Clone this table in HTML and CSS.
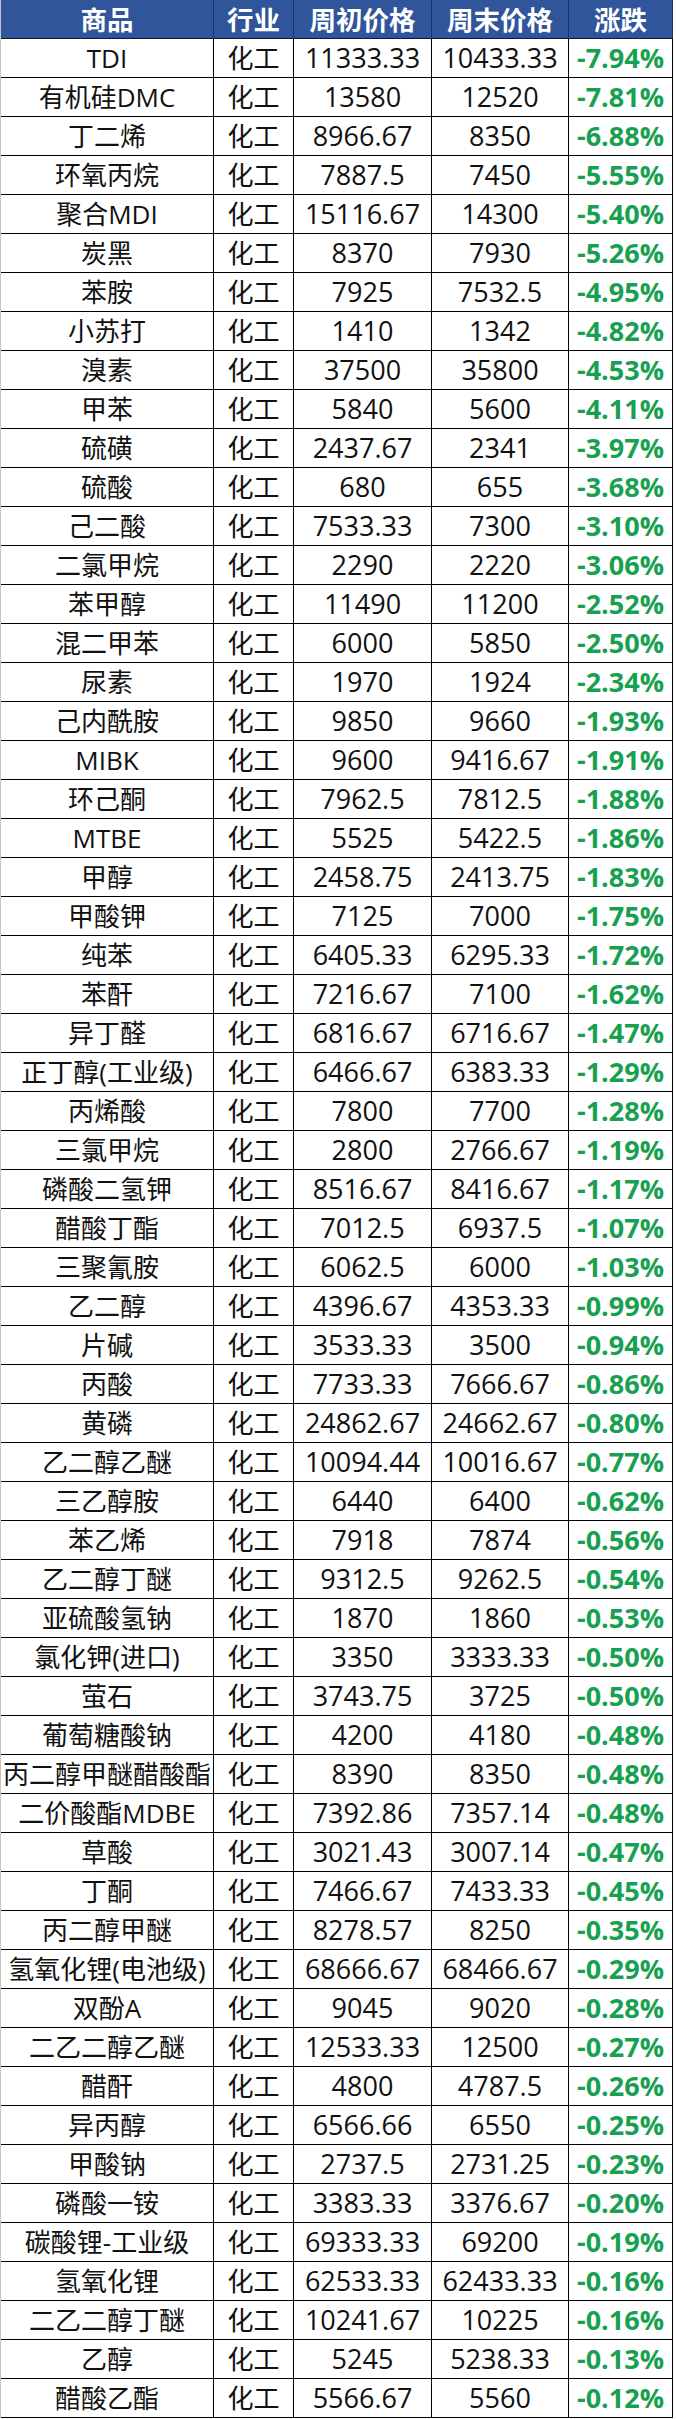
FILE: index.html
```html
<!DOCTYPE html>
<html lang="zh-CN">
<head>
<meta charset="utf-8">
<title>化工品价格周涨跌</title>
<link rel="stylesheet" href="styles.css">
</head>
<body>
<table class="price-table">
<colgroup>
<col class="c-name"><col class="c-ind"><col class="c-start"><col class="c-end"><col class="c-chg">
</colgroup>
<thead>
<tr><th>商品</th><th>行业</th><th>周初价格</th><th>周末价格</th><th>涨跌</th></tr>
</thead>
<tbody>
<tr><td>TDI</td><td>化工</td><td class="num">11333.33</td><td class="num">10433.33</td><td class="chg">-7.94%</td></tr>
<tr><td>有机硅DMC</td><td>化工</td><td class="num">13580</td><td class="num">12520</td><td class="chg">-7.81%</td></tr>
<tr><td>丁二烯</td><td>化工</td><td class="num">8966.67</td><td class="num">8350</td><td class="chg">-6.88%</td></tr>
<tr><td>环氧丙烷</td><td>化工</td><td class="num">7887.5</td><td class="num">7450</td><td class="chg">-5.55%</td></tr>
<tr><td>聚合MDI</td><td>化工</td><td class="num">15116.67</td><td class="num">14300</td><td class="chg">-5.40%</td></tr>
<tr><td>炭黑</td><td>化工</td><td class="num">8370</td><td class="num">7930</td><td class="chg">-5.26%</td></tr>
<tr><td>苯胺</td><td>化工</td><td class="num">7925</td><td class="num">7532.5</td><td class="chg">-4.95%</td></tr>
<tr><td>小苏打</td><td>化工</td><td class="num">1410</td><td class="num">1342</td><td class="chg">-4.82%</td></tr>
<tr><td>溴素</td><td>化工</td><td class="num">37500</td><td class="num">35800</td><td class="chg">-4.53%</td></tr>
<tr><td>甲苯</td><td>化工</td><td class="num">5840</td><td class="num">5600</td><td class="chg">-4.11%</td></tr>
<tr><td>硫磺</td><td>化工</td><td class="num">2437.67</td><td class="num">2341</td><td class="chg">-3.97%</td></tr>
<tr><td>硫酸</td><td>化工</td><td class="num">680</td><td class="num">655</td><td class="chg">-3.68%</td></tr>
<tr><td>己二酸</td><td>化工</td><td class="num">7533.33</td><td class="num">7300</td><td class="chg">-3.10%</td></tr>
<tr><td>二氯甲烷</td><td>化工</td><td class="num">2290</td><td class="num">2220</td><td class="chg">-3.06%</td></tr>
<tr><td>苯甲醇</td><td>化工</td><td class="num">11490</td><td class="num">11200</td><td class="chg">-2.52%</td></tr>
<tr><td>混二甲苯</td><td>化工</td><td class="num">6000</td><td class="num">5850</td><td class="chg">-2.50%</td></tr>
<tr><td>尿素</td><td>化工</td><td class="num">1970</td><td class="num">1924</td><td class="chg">-2.34%</td></tr>
<tr><td>己内酰胺</td><td>化工</td><td class="num">9850</td><td class="num">9660</td><td class="chg">-1.93%</td></tr>
<tr><td>MIBK</td><td>化工</td><td class="num">9600</td><td class="num">9416.67</td><td class="chg">-1.91%</td></tr>
<tr><td>环己酮</td><td>化工</td><td class="num">7962.5</td><td class="num">7812.5</td><td class="chg">-1.88%</td></tr>
<tr><td>MTBE</td><td>化工</td><td class="num">5525</td><td class="num">5422.5</td><td class="chg">-1.86%</td></tr>
<tr><td>甲醇</td><td>化工</td><td class="num">2458.75</td><td class="num">2413.75</td><td class="chg">-1.83%</td></tr>
<tr><td>甲酸钾</td><td>化工</td><td class="num">7125</td><td class="num">7000</td><td class="chg">-1.75%</td></tr>
<tr><td>纯苯</td><td>化工</td><td class="num">6405.33</td><td class="num">6295.33</td><td class="chg">-1.72%</td></tr>
<tr><td>苯酐</td><td>化工</td><td class="num">7216.67</td><td class="num">7100</td><td class="chg">-1.62%</td></tr>
<tr><td>异丁醛</td><td>化工</td><td class="num">6816.67</td><td class="num">6716.67</td><td class="chg">-1.47%</td></tr>
<tr><td>正丁醇(工业级)</td><td>化工</td><td class="num">6466.67</td><td class="num">6383.33</td><td class="chg">-1.29%</td></tr>
<tr><td>丙烯酸</td><td>化工</td><td class="num">7800</td><td class="num">7700</td><td class="chg">-1.28%</td></tr>
<tr><td>三氯甲烷</td><td>化工</td><td class="num">2800</td><td class="num">2766.67</td><td class="chg">-1.19%</td></tr>
<tr><td>磷酸二氢钾</td><td>化工</td><td class="num">8516.67</td><td class="num">8416.67</td><td class="chg">-1.17%</td></tr>
<tr><td>醋酸丁酯</td><td>化工</td><td class="num">7012.5</td><td class="num">6937.5</td><td class="chg">-1.07%</td></tr>
<tr><td>三聚氰胺</td><td>化工</td><td class="num">6062.5</td><td class="num">6000</td><td class="chg">-1.03%</td></tr>
<tr><td>乙二醇</td><td>化工</td><td class="num">4396.67</td><td class="num">4353.33</td><td class="chg">-0.99%</td></tr>
<tr><td>片碱</td><td>化工</td><td class="num">3533.33</td><td class="num">3500</td><td class="chg">-0.94%</td></tr>
<tr><td>丙酸</td><td>化工</td><td class="num">7733.33</td><td class="num">7666.67</td><td class="chg">-0.86%</td></tr>
<tr><td>黄磷</td><td>化工</td><td class="num">24862.67</td><td class="num">24662.67</td><td class="chg">-0.80%</td></tr>
<tr><td>乙二醇乙醚</td><td>化工</td><td class="num">10094.44</td><td class="num">10016.67</td><td class="chg">-0.77%</td></tr>
<tr><td>三乙醇胺</td><td>化工</td><td class="num">6440</td><td class="num">6400</td><td class="chg">-0.62%</td></tr>
<tr><td>苯乙烯</td><td>化工</td><td class="num">7918</td><td class="num">7874</td><td class="chg">-0.56%</td></tr>
<tr><td>乙二醇丁醚</td><td>化工</td><td class="num">9312.5</td><td class="num">9262.5</td><td class="chg">-0.54%</td></tr>
<tr><td>亚硫酸氢钠</td><td>化工</td><td class="num">1870</td><td class="num">1860</td><td class="chg">-0.53%</td></tr>
<tr><td>氯化钾(进口)</td><td>化工</td><td class="num">3350</td><td class="num">3333.33</td><td class="chg">-0.50%</td></tr>
<tr><td>萤石</td><td>化工</td><td class="num">3743.75</td><td class="num">3725</td><td class="chg">-0.50%</td></tr>
<tr><td>葡萄糖酸钠</td><td>化工</td><td class="num">4200</td><td class="num">4180</td><td class="chg">-0.48%</td></tr>
<tr><td>丙二醇甲醚醋酸酯</td><td>化工</td><td class="num">8390</td><td class="num">8350</td><td class="chg">-0.48%</td></tr>
<tr><td>二价酸酯MDBE</td><td>化工</td><td class="num">7392.86</td><td class="num">7357.14</td><td class="chg">-0.48%</td></tr>
<tr><td>草酸</td><td>化工</td><td class="num">3021.43</td><td class="num">3007.14</td><td class="chg">-0.47%</td></tr>
<tr><td>丁酮</td><td>化工</td><td class="num">7466.67</td><td class="num">7433.33</td><td class="chg">-0.45%</td></tr>
<tr><td>丙二醇甲醚</td><td>化工</td><td class="num">8278.57</td><td class="num">8250</td><td class="chg">-0.35%</td></tr>
<tr><td>氢氧化锂(电池级)</td><td>化工</td><td class="num">68666.67</td><td class="num">68466.67</td><td class="chg">-0.29%</td></tr>
<tr><td>双酚A</td><td>化工</td><td class="num">9045</td><td class="num">9020</td><td class="chg">-0.28%</td></tr>
<tr><td>二乙二醇乙醚</td><td>化工</td><td class="num">12533.33</td><td class="num">12500</td><td class="chg">-0.27%</td></tr>
<tr><td>醋酐</td><td>化工</td><td class="num">4800</td><td class="num">4787.5</td><td class="chg">-0.26%</td></tr>
<tr><td>异丙醇</td><td>化工</td><td class="num">6566.66</td><td class="num">6550</td><td class="chg">-0.25%</td></tr>
<tr><td>甲酸钠</td><td>化工</td><td class="num">2737.5</td><td class="num">2731.25</td><td class="chg">-0.23%</td></tr>
<tr><td>磷酸一铵</td><td>化工</td><td class="num">3383.33</td><td class="num">3376.67</td><td class="chg">-0.20%</td></tr>
<tr><td>碳酸锂-工业级</td><td>化工</td><td class="num">69333.33</td><td class="num">69200</td><td class="chg">-0.19%</td></tr>
<tr><td>氢氧化锂</td><td>化工</td><td class="num">62533.33</td><td class="num">62433.33</td><td class="chg">-0.16%</td></tr>
<tr><td>二乙二醇丁醚</td><td>化工</td><td class="num">10241.67</td><td class="num">10225</td><td class="chg">-0.16%</td></tr>
<tr><td>乙醇</td><td>化工</td><td class="num">5245</td><td class="num">5238.33</td><td class="chg">-0.13%</td></tr>
<tr><td>醋酸乙酯</td><td>化工</td><td class="num">5566.67</td><td class="num">5560</td><td class="chg">-0.12%</td></tr>
</tbody>
</table>
</body>
</html>
```

FILE: styles.css
```css
html, body {
  margin: 0;
  padding: 0;
  background: #ffffff;
}

.price-table {
  border-collapse: separate;
  border-spacing: 0;
  table-layout: fixed;
  width: 673px;
  border-left: 1px solid #c4c4c4;
  font-family: "Open Sans", "Noto Sans CJK SC", sans-serif;
  font-size: 26px;
  color: #111111;
}

.c-name { width: 213px; }
.c-ind { width: 80px; }
.c-start { width: 138px; }
.c-end { width: 137px; }
.c-chg { width: 104px; }

.price-table th,
.price-table td {
  box-sizing: border-box;
  height: 39px;
  padding: 0;
  text-align: center;
  vertical-align: middle;
  white-space: nowrap;
  overflow: hidden;
  line-height: 38px;
  border-right: 1px solid #000000;
  border-bottom: 1px solid #000000;
}

.price-table th {
  background: #30559a;
  color: #ffffff;
  font-family: "Noto Sans CJK SC", sans-serif;
  font-weight: 700;
  font-size: 26.5px;
  border-right-color: #1c3566;
  border-bottom-color: #0d1a33;
}

.price-table td.num {
  font-size: 27px;
}

.price-table td.chg {
  color: #18a051;
  font-weight: 700;
  font-size: 27px;
}
```
